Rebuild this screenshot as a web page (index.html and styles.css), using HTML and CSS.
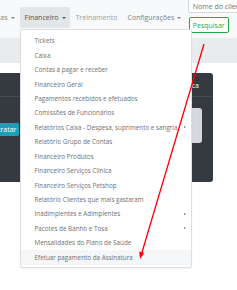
FILE: index.html
```html
<!DOCTYPE html>
<html lang="pt-BR">
<head>
<meta charset="utf-8">
<title>Financeiro</title>
<link rel="stylesheet" href="styles.css">
</head>
<body>
<div class="page">
  <nav class="navbar">
    <ul class="nav">
      <li class="nav-item first">Consultas <span class="caret"></span></li>
      <li class="nav-item active">Financeiro <span class="caret"></span>
        <div class="dropdown-menu">
          <a class="dropdown-item">Tickets</a>
          <a class="dropdown-item">Caixa</a>
          <a class="dropdown-item">Contas à pagar e receber</a>
          <a class="dropdown-item">Financeiro Geral</a>
          <a class="dropdown-item">Pagamentos recebidos e efetuados</a>
          <a class="dropdown-item">Comissões de Funcionários</a>
          <a class="dropdown-item sub">Relatórios Caixa - Despesa, suprimento e sangria</a>
          <a class="dropdown-item">Relatório Grupo de Contas</a>
          <a class="dropdown-item">Financeiro Produtos</a>
          <a class="dropdown-item">Financeiro Serviços Clínica</a>
          <a class="dropdown-item">Financeiro Serviços Petshop</a>
          <a class="dropdown-item">Relatório Clientes que mais gastaram</a>
          <a class="dropdown-item sub">Inadimplentes e Adimplentes</a>
          <a class="dropdown-item sub">Pacotes de Banho e Tosa</a>
          <a class="dropdown-item">Mensalidades do Plano de Saúde</a>
          <a class="dropdown-item hover">Efetuar pagamento da Assinatura</a>
        </div>
      </li>
      <li class="nav-item muted">Treinamento</li>
      <li class="nav-item">Configurações <span class="caret"></span></li>
    </ul>
    <form class="search">
      <input class="search-input" type="text" placeholder="Nome do cliente">
      <button class="btn-search" type="button">Pesquisar</button>
    </form>
  </nav>
  <div class="band"></div>
  <section class="card">
    <div class="card-header"><span class="card-title">Busca</span></div>
    <div class="card-body">
      <button class="btn-teal" type="button">Contratar</button>
      <div class="panel"></div>
    </div>
  </section>
</div>
<svg class="arrow" width="237" height="290" viewBox="0 0 237 290">
  <line x1="204" y1="44" x2="141.5" y2="254" stroke="#ff0000" stroke-width="1.3"/>
  <polygon points="140,259 139.2,251.5 144.2,253" fill="#ff0000"/>
</svg>
</body>
</html>
```

FILE: styles.css
```css
* { box-sizing: border-box; }
html, body { margin: 0; padding: 0; }
body {
  width: 237px;
  height: 290px;
  overflow: hidden;
  background: #ffffff;
  font-family: "Open Sans", "Noto Sans", sans-serif;
  position: relative;
}
.page { width: 237px; }

.navbar {
  height: 38px;
  background: #f8f9fa;
  display: flex;
  align-items: flex-start;
  position: relative;
  z-index: 5;
}
.nav {
  list-style: none;
  margin: 7px 0 0 -29px;
  padding: 0;
  display: flex;
  gap: 1px;
  flex-shrink: 0;
}
.nav-item {
  position: relative;
  height: 21px;
  padding: 0 4.5px;
  display: flex;
  align-items: center;
  gap: 3px;
  font-size: 7px;
  color: #7b8187;
  white-space: nowrap;
}
.nav-item.active {
  background: #e3e6e9;
  color: #4c5257;
  border-radius: 2px;
}
.nav-item.muted { color: #9aa0a5; }
.caret {
  width: 0; height: 0;
  border-left: 2.2px solid transparent;
  border-right: 2.2px solid transparent;
  border-top: 2.5px solid currentColor;
}

.search {
  margin: -9px 0 0 2px;
  display: flex;
  flex-direction: column;
  align-items: flex-start;
  gap: 4px;
  flex-shrink: 0;
}
.search-input {
  width: 60px;
  height: 22px;
  border: 1px solid #d5d9dd;
  border-radius: 2px;
  background: #fff;
  font-family: inherit;
  font-size: 7px;
  padding: 8px 4px 0 4px;
  margin: 0;
  color: #495057;
}
.search-input::placeholder { color: #6c757d; }
.btn-search {
  margin: 0 0 0 1px;
  height: 16px;
  padding: 0 3px;
  border: 1px solid #28a745;
  border-radius: 2px;
  background: #fff;
  color: #28a745;
  font-family: inherit;
  font-size: 7px;
}

.band {
  height: 25px;
  background: #e9ecef;
  margin-bottom: 10px;
}

.card {
  margin-left: -10px;
  width: 223px;
  height: 109px;
  background: #343a40;
  border-radius: 3px;
}
.card-header {
  height: 24px;
  border-bottom: 1px solid #454b52;
  display: flex;
  align-items: center;
  justify-content: flex-end;
  padding-right: 14px;
  padding-top: 2px;
}
.card-title {
  color: #ffffff;
  font-size: 7px;
}
.card-body {
  position: relative;
  display: flex;
  align-items: flex-start;
  padding-top: 11px;
}
.btn-teal {
  margin-top: 15px;
  margin-left: -8px;
  height: 13px;
  padding: 0 3px;
  border: 0;
  border-radius: 2px;
  background: #17a2b8;
  color: #ffffff;
  font-family: inherit;
  font-size: 7px;
}
.panel {
  margin-left: auto;
  margin-right: 11px;
  width: 120px;
  height: 35px;
  background: #d6d8db;
  border-radius: 3px;
}

.dropdown-menu {
  position: absolute;
  left: 0;
  top: 22px;
  width: 172px;
  background: #ffffff;
  border: 1px solid rgba(0, 0, 0, 0.13);
  border-radius: 3px;
  box-shadow: 0 1px 2px rgba(0, 0, 0, 0.06);
  padding: 3.5px 0 2.5px;
  z-index: 10;
}
.dropdown-item {
  display: flex;
  align-items: center;
  justify-content: space-between;
  height: 14.45px;
  padding: 0 5px 0 13.5px;
  font-size: 6.3px;
  color: #6c7278;
  white-space: nowrap;
}
.dropdown-item.sub::after {
  content: "";
  width: 0; height: 0;
  border-top: 1.8px solid transparent;
  border-bottom: 1.8px solid transparent;
  border-left: 2.2px solid #6c7278;
}
.dropdown-item.hover { background: #f5f6f8; }

.arrow {
  position: absolute;
  left: 0;
  top: 0;
  z-index: 20;
  pointer-events: none;
}
```
